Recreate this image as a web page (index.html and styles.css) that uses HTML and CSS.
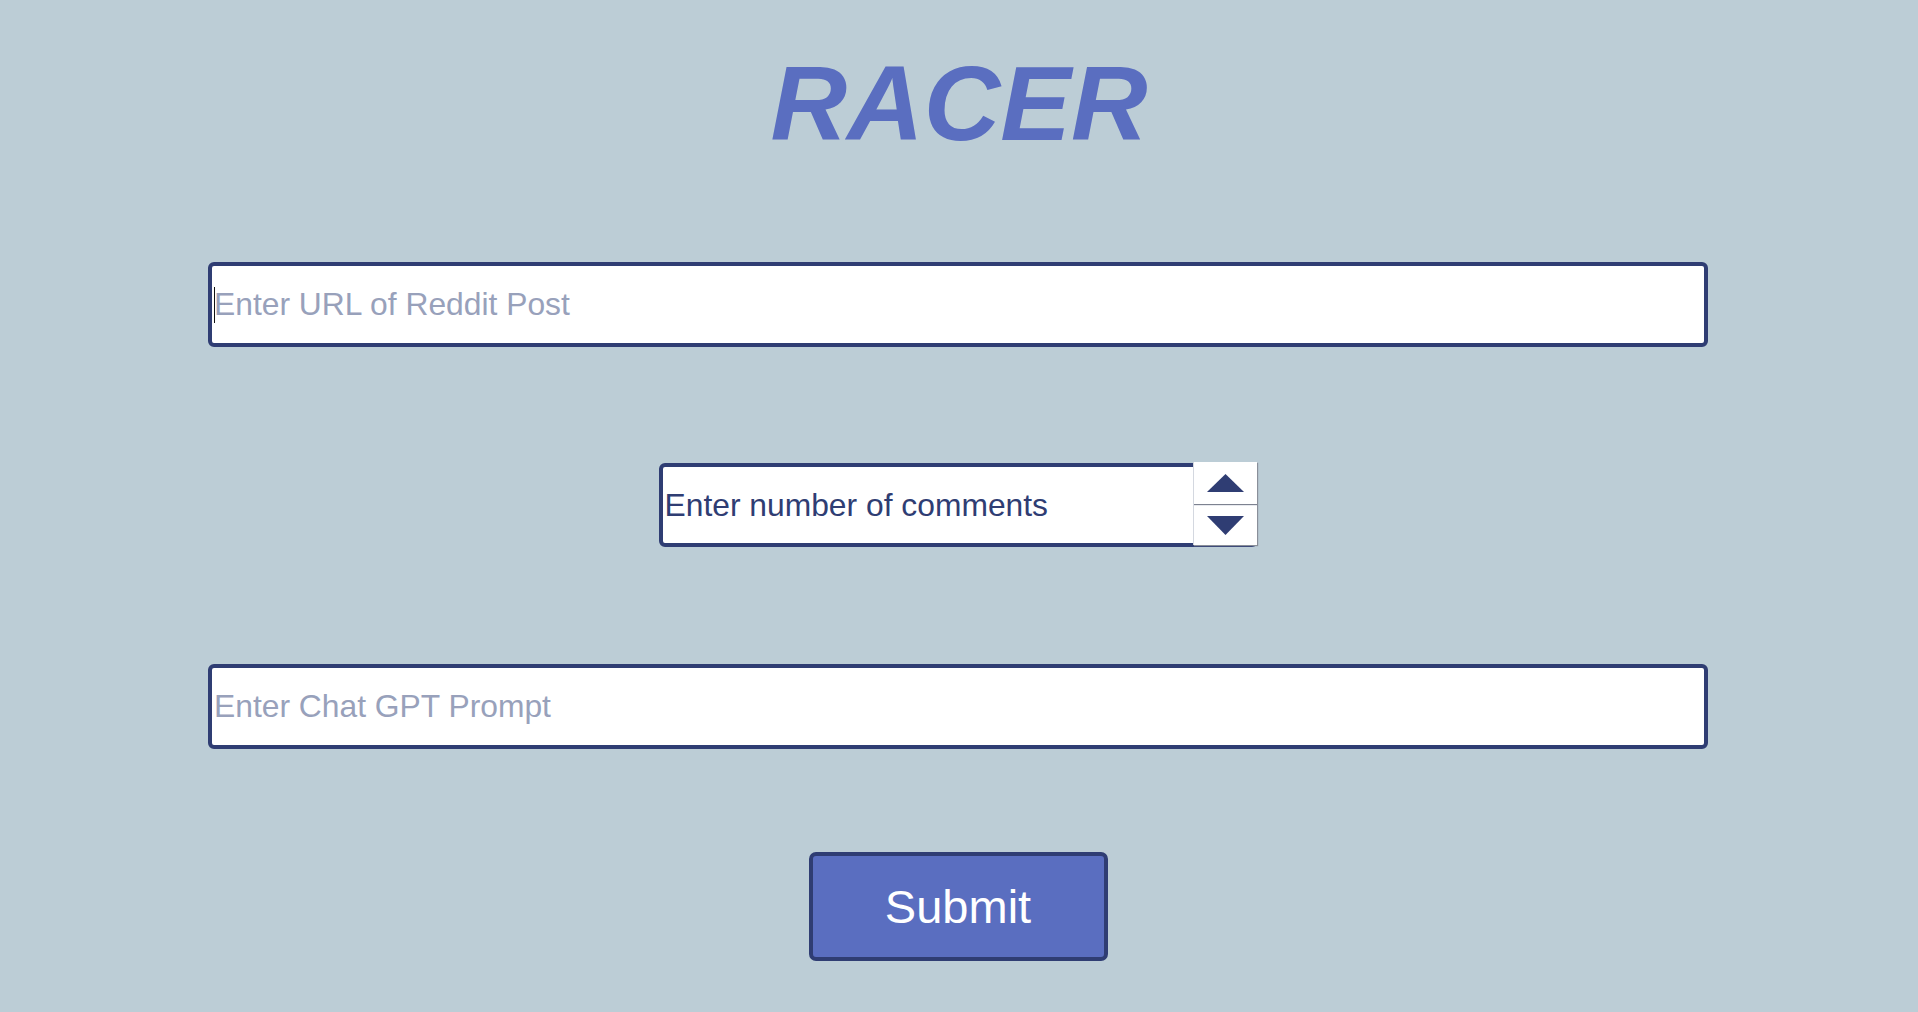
FILE: index.html
```html
<!DOCTYPE html>
<html lang="en">
<head>
<meta charset="utf-8">
<title>RACER</title>
<link rel="stylesheet" href="styles.css">
</head>
<body>
<main class="page">
  <h1 class="title">RACER</h1>
  <form class="form">
    <div class="field field-wide">
      <input class="text-input" type="text" placeholder="Enter URL of Reddit Post">
      <span class="caret"></span>
    </div>
    <div class="field field-number">
      <input class="text-input number-input" type="text" value="Enter number of comments">
      <div class="spinner">
        <div class="spin-half spin-up">
          <svg width="37" height="18" viewBox="0 0 37 18"><polygon points="18.5,0 37,18 0,18" fill="#2f3d73"/></svg>
        </div>
        <div class="spin-half spin-down">
          <svg width="37" height="19" viewBox="0 0 37 19"><polygon points="0,0 37,0 18.5,19" fill="#2f3d73"/></svg>
        </div>
      </div>
    </div>
    <div class="field field-wide field-prompt">
      <input class="text-input" type="text" placeholder="Enter Chat GPT Prompt">
    </div>
    <button class="submit" type="button">Submit</button>
  </form>
</main>
</body>
</html>
```
FILE: styles.css
```css
html, body {
  margin: 0;
  padding: 0;
  background: #bccdd6;
}
body {
  font-family: "Liberation Sans", Arial, sans-serif;
  min-height: 1012px;
}
.page {
  display: flex;
  flex-direction: column;
  align-items: center;
  padding-top: 43px;
}
.title {
  margin: 0;
  font-size: 106px;
  line-height: 120px;
  font-weight: bold;
  font-style: italic;
  color: #5a6ec0;
}
.form {
  display: flex;
  flex-direction: column;
  align-items: center;
  margin-top: 99px;
  padding-right: 2px;
}
.field {
  position: relative;
}
.field-wide {
  width: 1500px;
}
.field-number {
  width: 599px;
  margin-top: 116px;
}
.field-prompt {
  margin-top: 117px;
}
.text-input {
  box-sizing: border-box;
  display: block;
  width: 100%;
  height: 85px;
  margin: 0;
  padding: 0 2px;
  border: 4px solid #2f3d73;
  border-radius: 6px;
  background: #ffffff;
  font-family: "Liberation Sans", Arial, sans-serif;
  font-size: 31.8px;
  color: #2f3d73;
  outline: none;
}
.text-input::placeholder {
  color: #98a1bb;
  opacity: 1;
}
.number-input {
  height: 84px;
}
.caret {
  position: absolute;
  left: 6px;
  top: 25px;
  width: 1px;
  height: 36px;
  background: #111;
}
.spinner {
  position: absolute;
  right: 1px;
  top: -1px;
  width: 63px;
  height: 83px;
  background: #ffffff;
  border-left: 1px solid #d4d8e0;
  box-shadow: 1px 1px 1px #8a8f99;
  display: flex;
  flex-direction: column;
}
.spin-half {
  flex: 1;
  display: flex;
  justify-content: center;
}
.spin-up {
  align-items: flex-start;
  padding-top: 12px;
  border-bottom: 1px solid #7d8290;
  box-shadow: 0 1px 0 #e8eaef;
}
.spin-down {
  align-items: flex-start;
  padding-top: 11px;
}
.submit {
  box-sizing: border-box;
  margin-top: 103px;
  width: 299px;
  height: 109px;
  border: 4px solid #2f3d73;
  border-radius: 7px;
  background: #5a6ec0;
  color: #ffffff;
  font-family: "Liberation Sans", Arial, sans-serif;
  font-size: 47px;
  padding: 0;
  cursor: pointer;
}
```
